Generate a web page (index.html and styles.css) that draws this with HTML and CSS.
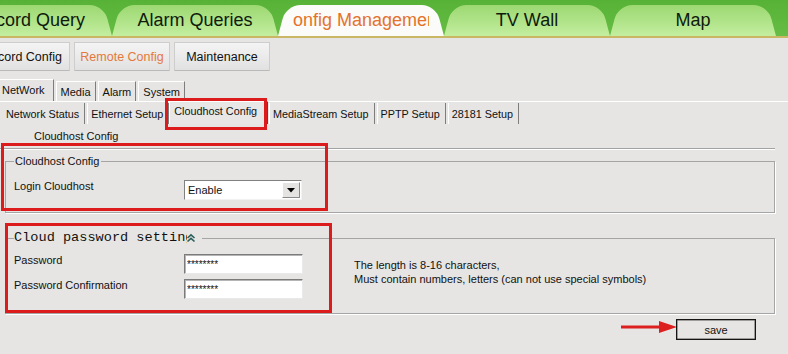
FILE: index.html
```html
<!DOCTYPE html>
<html lang="en">
<head>
    <meta charset="UTF-8">
    <meta name="viewport" content="width=device-width, initial-scale=1.0">
    <title>Remote Config - Cloudhost</title>
    <link rel="stylesheet" href="styles.css">
</head>
<body>
    <div class="page">
        <div class="topbar">
            <div class="nav">
                <div class="nav-tab"><span class="nav-label">Record Query</span></div>
                <div class="nav-tab"><span class="nav-label">Alarm Queries</span></div>
                <div class="nav-tab active"><span class="nav-label">Config Management</span></div>
                <div class="nav-tab"><span class="nav-label">TV Wall</span></div>
                <div class="nav-tab"><span class="nav-label">Map</span></div>
            </div>
        </div>

        <div class="toolbar">
            <button class="tool">Record Config</button>
            <button class="tool current">Remote Config</button>
            <button class="tool">Maintenance</button>
        </div>

        <div class="tabs">
            <span class="tab selected">NetWork</span>
            <span class="tab">Media</span>
            <span class="tab">Alarm</span>
            <span class="tab">System</span>
        </div>

        <div class="subtabs">
            <span class="subtab">Network Status</span>
            <span class="subtab">Ethernet Setup</span>
            <span class="subtab selected">Cloudhost Config</span>
            <span class="subtab">MediaStream Setup</span>
            <span class="subtab">PPTP Setup</span>
            <span class="subtab">28181 Setup</span>
        </div>

        <div class="section-title">Cloudhost Config</div>

        <fieldset class="group group-host">
            <legend>Cloudhost Config</legend>
            <div class="row">
                <label>Login Cloudhost</label>
                <div class="select">
                    <span class="select-value">Enable</span>
                    <span class="select-btn">
                        <svg width="8" height="5" viewBox="0 0 8 5"><path d="M0 0h8L4 4.5z" fill="#000"/></svg>
                    </span>
                </div>
            </div>
        </fieldset>

        <fieldset class="group group-pass">
            <legend>
                <span class="legend-text">Cloud password setting</span>
                <svg class="collapse" width="10" height="10" viewBox="0 0 10 10">
                    <path d="M1.5 5L5 1.8 8.5 5M1.5 8.5L5 5.3 8.5 8.5" fill="none" stroke="#2b5f5a" stroke-width="1.6"/>
                </svg>
            </legend>
            <div class="pass-body">
                <div class="fields">
                    <div class="row">
                        <label>Password</label>
                        <input class="text-input" type="text" value="********">
                    </div>
                    <div class="row">
                        <label>Password Confirmation</label>
                        <input class="text-input" type="text" value="********">
                    </div>
                </div>
                <div class="hint">
                    The length is 8-16 characters,<br>
                    Must contain numbers, letters (can not use special symbols)
                </div>
            </div>
        </fieldset>

        <div class="actions">
            <svg class="arrow" width="56" height="14" viewBox="0 0 56 14">
                <path d="M0 7H42" stroke="#dc1f1f" stroke-width="3"/>
                <path d="M38 1L56 7 38 13z" fill="#dc1f1f"/>
            </svg>
            <button class="save">save</button>
        </div>

        <div class="mark mark-tab"></div>
        <div class="mark mark-host"></div>
        <div class="mark mark-pass"></div>
    </div>
</body>
</html>
```

FILE: styles.css
```css
body {
    margin: 0;
    background: #e6e5e3;
    font-family: 'Liberation Sans', Arial, sans-serif;
    font-size: 11px;
    color: #111;
    overflow: hidden;
}
.page {
    position: relative;
    width: 788px;
    height: 354px;
    overflow: hidden;
}

/* top navigation */
.topbar {
    padding-top: 5px;
    background: linear-gradient(to bottom, #56b236, #67bd45);
    border-bottom: 2px solid #c9b766;
}
.nav {
    display: flex;
    margin-left: -54px;
}
.nav-tab {
    position: relative;
    isolation: isolate;
    width: 166px;
    height: 31px;
    display: flex;
    justify-content: center;
    align-items: center;
    flex-shrink: 0;
}
.nav-tab::before,
.nav-tab::after {
    content: '';
    position: absolute;
    top: 0;
    bottom: 0;
    width: 56%;
    z-index: -1;
    background: linear-gradient(to bottom, #9cd871, #c3ee9f);
}
.nav-tab::before {
    left: 0;
    transform-origin: bottom left;
    transform: skewX(-15deg);
    border-radius: 14px 0 0 0;
}
.nav-tab::after {
    right: 0;
    transform-origin: bottom right;
    transform: skewX(15deg);
    border-radius: 0 14px 0 0;
}
.nav-tab.active::before,
.nav-tab.active::after {
    background: #fbfbf9;
}
.nav-label {
    width: 140px;
    display: flex;
    justify-content: center;
    overflow: hidden;
    white-space: nowrap;
    font-family: 'Liberation Sans', Arial, sans-serif;
    font-size: 18px;
    color: #0f1a0b;
}
.nav-tab.active .nav-label {
    width: 136px;
    color: #e4722c;
}

/* second level buttons */
.toolbar {
    display: flex;
    gap: 4px;
    margin-left: -26px;
    padding-top: 4px;
}
.tool {
    width: 96px;
    height: 29px;
    padding: 0;
    flex-shrink: 0;
    font-family: 'Liberation Sans', Arial, sans-serif;
    font-size: 12.5px;
    color: #111;
    background: linear-gradient(to bottom, #f4f4f4, #e1e1e1);
    border: 1px solid #cdcdcd;
    border-bottom-color: #b9b9b9;
    border-radius: 1px;
}
.tool.current {
    color: #e5793b;
}

/* classic tab rows */
.tabs {
    display: flex;
    align-items: flex-end;
    margin-top: 8px;
    height: 22px;
    border-bottom: 1px solid #fff;
}
.tab {
    height: 20px;
    line-height: 21px;
    padding: 0 4px;
    margin-left: 2px;
    border-top: 1px solid #fff;
    border-left: 1px solid #fff;
    border-right: 1px solid #7d7d7d;
    box-sizing: border-box;
}
.tab.selected {
    height: 22px;
    line-height: 20px;
    margin-left: 0;
    padding: 0 8px 0 2px;
    border-left: none;
}
.subtabs {
    display: flex;
    align-items: flex-end;
    height: 22px;
    padding-left: 3px;
    font-size: 10.8px;
}
.subtab {
    height: 21px;
    line-height: 22px;
    padding: 0 5px 0 3px;
    margin-right: 2px;
    border-right: 1px solid #7d7d7d;
    border-left: 1px solid #fff;
    box-sizing: border-box;
}
.subtab:first-child {
    border-left: none;
}
.subtab.selected {
    height: 23px;
    line-height: 18px;
    padding: 0 10px 0 4px;
    margin: 0 1px 0 -2px;
    border-top: 1px solid #fff;
    border-right: 1px solid #4a4a4a;
    background: #e8e7e5;
}

.section-title {
    height: 19px;
    line-height: 14px;
    padding: 5px 0 0 34px;
    margin-right: 13px;
    border-bottom: 1px solid #a3a3a3;
    box-shadow: 0 1px 0 #fff;
}

/* groups */
.group {
    margin: 6px 13px 0 5px;
    padding: 12px 8px 12px 8px;
    border: 1px solid #a5a5a5;
    box-shadow: 1px 1px 0 #fff;
    min-width: 0;
}
.group legend {
    padding: 0 2px 0 1px;
    line-height: 13px;
}
.row {
    display: flex;
    align-items: flex-start;
}
.row label {
    width: 170px;
    line-height: 13px;
}
.select {
    width: 118px;
    height: 20px;
    box-sizing: border-box;
    display: flex;
    align-items: center;
    background: #fff;
    border-top: 1px solid #808080;
    border-left: 1px solid #808080;
    border-right: 1px solid #f2f2f2;
    border-bottom: 1px solid #f2f2f2;
}
.select-value {
    flex: 1;
    padding-left: 3px;
}
.select-btn {
    width: 18px;
    height: 16px;
    margin-right: 1px;
    display: flex;
    justify-content: center;
    align-items: center;
    background: #e4e3e1;
    border: 1px solid #fff;
    border-right-color: #8a8a8a;
    border-bottom-color: #8a8a8a;
    box-sizing: border-box;
}

.group-pass {
    margin-top: 17px;
    padding-top: 8px;
    padding-bottom: 14px;
}
.group-pass legend {
    display: flex;
    align-items: center;
    padding: 0 6px 0 0;
    line-height: 16px;
}
.legend-text {
    width: 173px;
    overflow: hidden;
    white-space: nowrap;
    font-family: 'Liberation Mono', 'Courier New', monospace;
    font-size: 13.6px;
    color: #111;
}
.collapse {
    margin-left: -1px;
}
.pass-body {
    display: flex;
    align-items: flex-start;
}
.fields {
    display: flex;
    flex-direction: column;
    gap: 5px;
}
.text-input {
    width: 119px;
    height: 20px;
    box-sizing: border-box;
    margin: 0;
    padding: 0 0 0 2px;
    font-family: 'Liberation Sans', Arial, sans-serif;
    font-size: 10px;
    color: #111;
    background: #fff;
    border: 1px solid;
    border-color: #7b7b7b #e9e9e9 #e9e9e9 #7b7b7b;
    box-shadow: inset 1px 1px 0 #b5b5b5;
    outline: none;
}
.hint {
    margin: 4px 0 0 51px;
    line-height: 14px;
}

/* save */
.actions {
    display: flex;
    justify-content: flex-end;
    align-items: flex-start;
    padding-right: 32px;
    margin-top: 5px;
}
.arrow {
    margin-top: 1px;
    margin-right: -1px;
}
.save {
    width: 80px;
    height: 21px;
    padding: 0;
    font-family: 'Liberation Sans', Arial, sans-serif;
    font-size: 11px;
    color: #111;
    background: #e6e5e3;
    border: 1px solid #151515;
    box-shadow: inset 0 0 0 0.5px #555;
}

/* red annotation boxes */
.mark {
    position: absolute;
    box-sizing: border-box;
    border: 3px solid #dc1c1c;
    pointer-events: none;
}
.mark-tab {
    left: 165px;
    top: 98px;
    width: 102px;
    height: 32px;
}
.mark-host {
    left: 1px;
    top: 143px;
    width: 327px;
    height: 68px;
}
.mark-pass {
    left: 5px;
    top: 223px;
    width: 327px;
    height: 90px;
}
```
